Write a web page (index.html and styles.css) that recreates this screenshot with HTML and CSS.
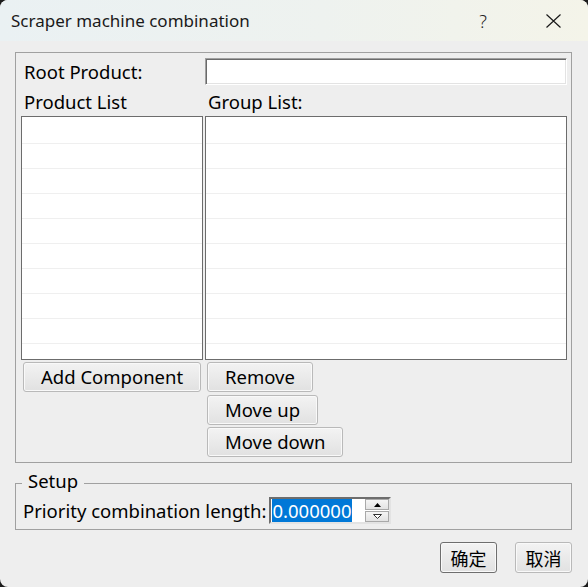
FILE: index.html
```html
<!DOCTYPE html>
<html lang="en">
<head>
<meta charset="utf-8">
<title>Scraper machine combination</title>
<link rel="stylesheet" href="styles.css">
</head>
<body>
<div class="window">
  <header class="titlebar">
    <span class="title">Scraper machine combination</span>
    <span class="tb-btn tb-help">?</span>
    <span class="tb-btn tb-close">
      <svg width="15" height="14" viewBox="0 0 15 14"><path d="M0.5 0.5 L14.5 13.5 M14.5 0.5 L0.5 13.5" stroke="#1b1b1b" stroke-width="1.2" fill="none"/></svg>
    </span>
  </header>
  <main class="content">
    <section class="group main-group">
      <div class="grid">
        <div class="lbl lbl-root">Root Product:</div>
        <div class="lineedit"></div>
        <div class="lbl lbl-head">Product List</div>
        <div class="lbl lbl-head">Group List:</div>
        <div class="listbox">
          <div class="row"></div><div class="row"></div><div class="row"></div><div class="row"></div><div class="row"></div>
          <div class="row"></div><div class="row"></div><div class="row"></div><div class="row"></div><div class="row"></div>
        </div>
        <div class="listbox">
          <div class="row"></div><div class="row"></div><div class="row"></div><div class="row"></div><div class="row"></div>
          <div class="row"></div><div class="row"></div><div class="row"></div><div class="row"></div><div class="row"></div>
        </div>
        <div class="btn-col">
          <button class="btn btn-wide">Add Component</button>
        </div>
        <div class="btn-col">
          <button class="btn">Remove</button>
          <button class="btn">Move up</button>
          <button class="btn">Move down</button>
        </div>
      </div>
    </section>
    <fieldset class="group setup">
      <legend class="legend">Setup</legend>
      <div class="setup-row">
        <span class="lbl">Priority combination length:</span>
        <div class="spinbox">
          <div class="spin-field"><span class="sel">0.000000</span></div>
          <div class="spin-btns">
            <div class="spin-btn">
              <svg width="7" height="4" viewBox="0 0 7 4"><polygon points="3.5,0 7,4 0,4" fill="#000"/></svg>
            </div>
            <div class="spin-btn">
              <svg width="9" height="5" viewBox="0 0 9 5"><polygon points="0.5,0.5 8.5,0.5 4.5,4.5" fill="#fff" stroke="#333" stroke-width="1"/></svg>
            </div>
          </div>
        </div>
      </div>
    </fieldset>
    <div class="dlg-btns">
      <button class="btn btn-dlg btn-default">确定</button>
      <button class="btn btn-dlg">取消</button>
    </div>
  </main>
</div>
</body>
</html>
```
FILE: styles.css
```css
html {
  background: #1c1c1c;
}
body {
  margin: 0;
  font-family: "Noto Sans", "Noto Sans CJK SC", sans-serif;
  font-size: 18.5px;
  color: #000;
}
.window {
  width: 588px;
  height: 587px;
  background: #eeeeee;
  border-radius: 8px;
  overflow: hidden;
  box-sizing: border-box;
}
.titlebar {
  height: 41px;
  display: flex;
  align-items: center;
  background: linear-gradient(90deg, #eaf1f3 0%, #eef2ef 55%, #f4f4e9 100%);
}
.title {
  flex: 1;
  padding-left: 11px;
  font-size: 17px;
  line-height: 41px;
  color: #1a1a1a;
}
.tb-btn {
  width: 70px;
  height: 41px;
  display: flex;
  align-items: center;
  justify-content: center;
}
.tb-help {
  font-size: 18px;
  font-weight: 300;
  color: #222;
}
.content {
  padding: 11px 16px 0 15px;
}
.group {
  border: 1px solid #a0a0a0;
  margin: 0;
  min-width: 0;
}
.main-group {
  padding: 5px 4px 5px 5px;
}
.grid {
  display: grid;
  grid-template-columns: 182px 362px;
  grid-template-rows: 27px 31px 244px auto;
  column-gap: 2px;
}
.lbl {
  line-height: 27px;
  white-space: nowrap;
}
.lbl-root {
  padding-left: 3px;
}
.lbl-head {
  padding: 5px 0 0 3px;
  line-height: 24px;
}
.lineedit {
  box-sizing: border-box;
  height: 27px;
  background: #fff;
  border: 1px solid;
  border-color: #a0a0a0 #ffffff #ffffff #a0a0a0;
  box-shadow: inset 1px 1px 0 #6a6a6a, inset -1px -1px 0 #e3e3e3;
}
.listbox {
  box-sizing: border-box;
  height: 244px;
  background: #fff;
  border: 1px solid #6c6c6c;
  padding-top: 2px;
  overflow: hidden;
}
.row {
  height: 25px;
  box-sizing: border-box;
  border-bottom: 1px solid #efefef;
}
.btn-col {
  padding: 2px 2px 0 2px;
  display: flex;
  flex-direction: column;
  align-items: flex-start;
  gap: 2.5px;
}
.btn {
  font-family: inherit;
  font-size: 18.5px;
  line-height: 24px;
  color: #000;
  height: 30px;
  padding: 0 17px;
  margin: 0;
  border: 1px solid #b9b9b9;
  border-radius: 3px;
  background: linear-gradient(#f3f3f3, #e1e1e1);
  box-shadow: inset 0 0 0 1px #f9f9f9;
  white-space: nowrap;
}
.btn-wide {
  width: 100%;
}
.setup {
  margin-top: 6px;
  padding: 0 4px 5px 7px;
}
.legend {
  margin-left: -1px;
  padding: 0 6px 4px;
  line-height: 24px;
}
.setup-row {
  display: flex;
  align-items: center;
  height: 27px;
}
.spinbox {
  margin-left: 3px;
  width: 122px;
  height: 27px;
  box-sizing: border-box;
  display: flex;
  background: #fff;
  border: 2px solid;
  border-color: #6d6d6d #e3e3e3 #e3e3e3 #6d6d6d;
  padding-left: 1px;
}
.spin-field {
  flex: 1;
  display: flex;
  align-items: center;
}
.sel {
  background: #0078d7;
  color: #fff;
  line-height: 23px;
}
.spin-btns {
  width: 24px;
  display: flex;
  flex-direction: column;
  gap: 1px;
}
.spin-btn {
  flex: 1;
  box-sizing: border-box;
  border: 1px solid #a9a9a9;
  background: linear-gradient(#f5f5f5, #e3e3e3);
  display: flex;
  align-items: center;
  justify-content: center;
}
.dlg-btns {
  margin-top: 12px;
  display: flex;
  justify-content: flex-end;
  gap: 18px;
}
.btn-dlg {
  width: 57px;
  height: 31px;
  padding: 0;
  font-family: "Noto Sans CJK SC", sans-serif;
  font-size: 18px;
}
.btn-default {
  border-color: #6e6e6e;
}
```
